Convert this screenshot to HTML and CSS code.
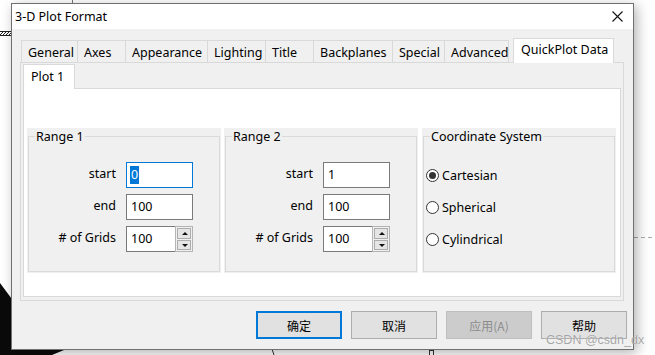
FILE: index.html
```html
<!doctype html>
<html>
<head>
<meta charset="utf-8"/>
<title>3-D Plot Format</title>
<link rel="stylesheet" href="styles.css">
</head>
<body>
<svg class="desk" width="655" height="355" viewBox="0 0 655 355">
	<line x1="72.5" y1="0" x2="72.5" y2="4" stroke="#777"/>
	<rect x="-1" y="31.5" width="13" height="4" fill="#fff" stroke="#222"/>
	<path d="M0 35 L3 32 M3 35 L6 32 M6 35 L9 32 M9 35 L12 32" stroke="#222" stroke-width="1"/>
	<polygon points="0,283 20,310 60,345 64,350 52,355 0,355" fill="#0a0a0a"/>
	<line x1="634" y1="237.5" x2="655" y2="237.5" stroke="#aaa" stroke-dasharray="4 3"/>
	<line x1="272" y1="349" x2="274" y2="355" stroke="#333"/>
	<rect x="429.5" y="350.5" width="4" height="5" fill="none" stroke="#333"/>
</svg>

<div class="dlg">
	<div class="cap">
		<span class="cap-title">3-D Plot Format</span>
		<svg class="cap-x" width="11" height="11" viewBox="0 0 11 11">
			<path d="M0.5 0.5 L10.5 10.5 M10.5 0.5 L0.5 10.5" stroke="#111" stroke-width="1.1"/>
		</svg>
	</div>
	<div class="dlg-body">
		<div class="tabs">
			<div class="tab t-general">General</div>
			<div class="tab t-axes">Axes</div>
			<div class="tab t-appear">Appearance</div>
			<div class="tab t-light">Lighting</div>
			<div class="tab t-title">Title</div>
			<div class="tab t-back">Backplanes</div>
			<div class="tab t-special">Special</div>
			<div class="tab t-adv">Advanced</div>
			<div class="tab t-quick sel">QuickPlot Data</div>
		</div>
		<div class="panel">
			<div class="subtabs">
				<div class="subtab">Plot 1</div>
			</div>
			<div class="subpanel">
				<div class="grp">
					<fieldset>
						<legend><span>Range 1</span></legend>
						<div class="row">
							<label>start</label>
							<div class="field focus"><span class="hl">0</span></div>
						</div>
						<div class="row">
							<label>end</label>
							<div class="field">100</div>
						</div>
						<div class="row">
							<label># of Grids</label>
							<div class="num">
								<div class="num-val">100</div>
								<div class="spin"><b class="up"></b><b class="dn"></b></div>
							</div>
						</div>
					</fieldset>
				</div>
				<div class="grp">
					<fieldset>
						<legend><span>Range 2</span></legend>
						<div class="row">
							<label>start</label>
							<div class="field">1</div>
						</div>
						<div class="row">
							<label>end</label>
							<div class="field">100</div>
						</div>
						<div class="row">
							<label># of Grids</label>
							<div class="num">
								<div class="num-val">100</div>
								<div class="spin"><b class="up"></b><b class="dn"></b></div>
							</div>
						</div>
					</fieldset>
				</div>
				<div class="grp grp-coord">
					<fieldset>
						<legend><span>Coordinate System</span></legend>
						<div class="row radio"><i class="dot on"></i>Cartesian</div>
						<div class="row radio"><i class="dot"></i>Spherical</div>
						<div class="row radio"><i class="dot"></i>Cylindrical</div>
					</fieldset>
				</div>
			</div>
		</div>
		<div class="btns">
			<div class="btn def">确定</div>
			<div class="btn">取消</div>
			<div class="btn off">应用(A)</div>
			<div class="btn">帮助</div>
		</div>
	</div>
</div>

<div class="mark">CSDN @csdn_dx</div>
</body>
</html>
```

FILE: styles.css
```css
body {
	margin: 0;
	width: 655px;
	height: 355px;
	background: #fff;
	position: relative;
	overflow: hidden;
	font-family: "Noto Sans", "Noto Sans CJK SC", sans-serif;
	font-size: 12px;
	color: #000;
}
.desk {
	position: absolute;
	left: 0;
	top: 0;
}

/* window */
.dlg {
	position: absolute;
	left: 11px;
	top: 3px;
	width: 623px;
	height: 347px;
	box-sizing: border-box;
	border: 1px solid #707070;
	background: #f0f0f0;
	box-shadow: 3px 3px 12px rgba(0, 0, 0, 0.3);
	display: flex;
	flex-direction: column;
}
.cap {
	height: 25px;
	background: #fff;
	display: flex;
	align-items: center;
	padding-left: 3px;
	padding-bottom: 1px;
	box-sizing: border-box;
}
.cap-title {
	font-size: 12.5px;
}
.cap-x {
	margin-left: auto;
	margin-right: 10px;
}
.dlg-body {
	flex: 1;
	padding: 11px 9px 0 8px;
}

/* outer tabs */
.tabs {
	display: flex;
	align-items: flex-end;
	height: 22px;
	padding-left: 1px;
	position: relative;
	z-index: 1;
}
.tab {
	height: 22px;
	box-sizing: border-box;
	border: 1px solid #d9d9d9;
	border-bottom: none;
	margin-right: -1px;
	padding-left: 6px;
	line-height: 23px;
	background: #f0f0f0;
	white-space: nowrap;
	font-size: 12.5px;
}
.t-general { width: 57px; }
.t-axes { width: 49px; }
.t-appear { width: 83px; }
.t-light { width: 59px; }
.t-title { width: 49px; }
.t-back { width: 80px; }
.t-special { width: 53px; }
.t-adv { width: 65px; }
.t-quick { width: 101px; }
.tab.sel {
	height: 25px;
	margin-left: 5px;
	margin-bottom: -1px;
	background: #fff;
	padding-left: 7px;
	line-height: 22px;
}
.panel {
	height: 239px;
	box-sizing: border-box;
	border: 1px solid #d9d9d9;
	padding: 1px 2px 3px 2px;
	display: flex;
	flex-direction: column;
}

/* inner tabs */
.subtabs {
	display: flex;
	height: 24px;
	position: relative;
	z-index: 1;
}
.subtab {
	width: 52px;
	height: 25px;
	box-sizing: border-box;
	border: 1px solid #d9d9d9;
	border-bottom: none;
	background: #fff;
	padding-left: 7px;
	line-height: 23px;
	font-size: 12.5px;
}
.subpanel {
	flex: 1;
	border: 1px solid #d9d9d9;
	background: #fff;
	padding: 39px 3px 0 3px;
	display: flex;
	gap: 3px;
}

/* group boxes */
.grp {
	width: 194px;
	height: 145px;
	box-sizing: border-box;
	background: #f0f0f0;
	padding: 0 1px 1px;
}
.grp-coord {
	margin-left: 1px;
}
fieldset {
	margin: 0;
	height: 100%;
	box-sizing: border-box;
	border: 1px solid #dadada;
	padding: 18px 0 0 0;
	display: flex;
	flex-direction: column;
	gap: 6px;
}
legend {
	margin-left: 6px;
	padding: 0 1px;
	line-height: 16px;
	font-size: 12.5px;
}
legend span {
	position: relative;
	top: 1px;
}
.row {
	display: flex;
	align-items: center;
	height: 26px;
}
.row label {
	width: 87px;
	text-align: right;
	margin-right: 10px;
	font-size: 12.5px;
	position: relative;
	top: -2px;
}
.field {
	width: 67px;
	height: 26px;
	box-sizing: border-box;
	border: 1px solid #7a7a7a;
	background: #fff;
	padding-left: 4px;
	line-height: 24px;
	font-size: 12.5px;
}
.field.focus {
	border-color: #0078d7;
	display: flex;
	align-items: center;
	padding-left: 3px;
}
.hl {
	background: #0078d7;
	color: #fff;
	line-height: 18px;
	padding: 0 1px;
}
.num {
	width: 67px;
	height: 26px;
	display: flex;
}
.num-val {
	flex: 1;
	border: 1px solid #7a7a7a;
	border-right: none;
	background: #fff;
	padding-left: 4px;
	line-height: 24px;
	font-size: 12.5px;
}
.spin {
	width: 18px;
	box-sizing: border-box;
	border: 1px solid #b4b4b4;
	background: #f0f0f0;
	padding: 1px;
	display: flex;
	flex-direction: column;
	gap: 1px;
}
.spin b {
	flex: 1;
	border: 1px solid #adadad;
	background: #e5e5e5;
	position: relative;
}
.spin b::after {
	content: "";
	position: absolute;
	left: 4px;
	top: 3px;
	border-left: 3px solid transparent;
	border-right: 3px solid transparent;
}
.spin .up::after {
	border-bottom: 3px solid #111;
}
.spin .dn::after {
	border-top: 3px solid #111;
}

/* radios */
.radio {
	padding-left: 2px;
	font-size: 12.5px;
}
.dot {
	width: 13px;
	height: 13px;
	box-sizing: border-box;
	border: 1px solid #333;
	border-radius: 50%;
	background: #fff;
	margin-right: 3px;
	position: relative;
}
.dot.on::after {
	content: "";
	position: absolute;
	left: 2px;
	top: 2px;
	width: 7px;
	height: 7px;
	border-radius: 50%;
	background: #333;
}

/* buttons */
.btns {
	display: flex;
	justify-content: flex-end;
	gap: 9px;
	margin-top: 10px;
	margin-right: -3px;
}
.btn {
	width: 86px;
	height: 28px;
	box-sizing: border-box;
	border: 1px solid #adadad;
	background: #e1e1e1;
	display: flex;
	align-items: center;
	justify-content: center;
	font-family: "Noto Sans CJK SC", sans-serif;
	font-size: 12px;
}
.btn.def {
	border: 2px solid #0078d7;
}
.btn.off {
	background: #cccccc;
	border-color: #bfbfbf;
	color: #8d8d8d;
}

.mark {
	position: absolute;
	left: 546px;
	top: 333px;
	font-family: "Liberation Sans", sans-serif;
	font-size: 12.5px;
	color: rgba(150, 150, 150, 0.85);
	text-shadow: 0 0 1px rgba(255, 255, 255, 0.8);
	white-space: nowrap;
}
```
